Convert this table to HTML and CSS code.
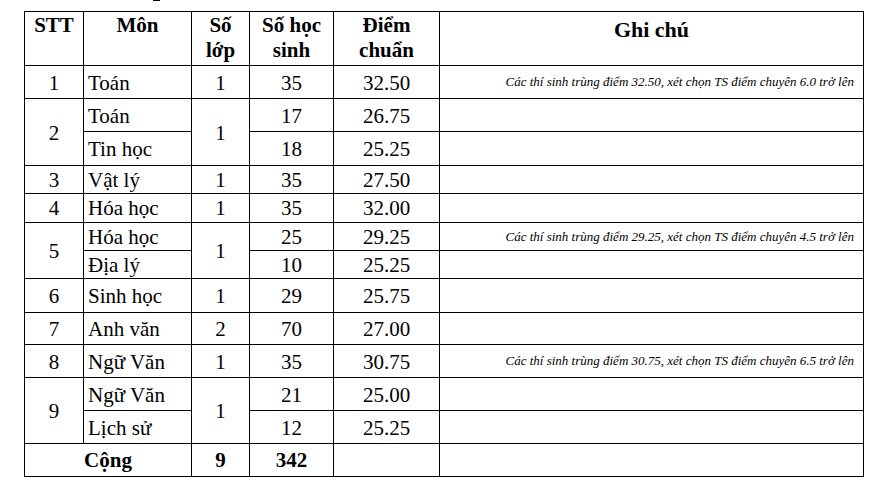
FILE: index.html
```html
<!DOCTYPE html>
<html lang="vi">
<head>
<meta charset="utf-8">
<title>Điểm chuẩn</title>
<link rel="stylesheet" href="styles.css">
</head>
<body>
<div class="page">
  <span class="stray"></span>
  <table class="scores">
    <colgroup>
      <col class="c-stt">
      <col class="c-mon">
      <col class="c-lop">
      <col class="c-hs">
      <col class="c-diem">
      <col class="c-note">
    </colgroup>
    <thead>
      <tr class="r54">
        <th>STT</th>
        <th>Môn</th>
        <th>Số<br>lớp</th>
        <th>Số học<br>sinh</th>
        <th>Điểm<br>chuẩn</th>
        <th class="note-h">Ghi chú</th>
      </tr>
    </thead>
    <tbody>
      <tr class="r33 tall">
        <td>1</td><td class="mon">Toán</td><td>1</td><td>35</td><td>32.50</td>
        <td class="note">Các thí sinh trùng điểm 32.50, xét chọn TS điểm chuyên 6.0 trở lên</td>
      </tr>
      <tr class="r33 tall">
        <td rowspan="2">2</td><td class="mon">Toán</td><td rowspan="2">1</td><td>17</td><td>26.75</td><td class="note"></td>
      </tr>
      <tr class="r34 tall">
        <td class="mon">Tin học</td><td>18</td><td>25.25</td><td class="note"></td>
      </tr>
      <tr class="r28">
        <td>3</td><td class="mon">Vật lý</td><td>1</td><td>35</td><td>27.50</td><td class="note"></td>
      </tr>
      <tr class="r29">
        <td>4</td><td class="mon">Hóa học</td><td>1</td><td>35</td><td>32.00</td><td class="note"></td>
      </tr>
      <tr class="r28">
        <td rowspan="2">5</td><td class="mon">Hóa học</td><td rowspan="2">1</td><td>25</td><td>29.25</td>
        <td class="note">Các thí sinh trùng điểm 29.25, xét chọn TS điểm chuyên 4.5 trở lên</td>
      </tr>
      <tr class="r28">
        <td class="mon">Địa lý</td><td>10</td><td>25.25</td><td class="note"></td>
      </tr>
      <tr class="r34 tall">
        <td>6</td><td class="mon">Sinh học</td><td>1</td><td>29</td><td>25.75</td><td class="note"></td>
      </tr>
      <tr class="r32 tall">
        <td>7</td><td class="mon">Anh văn</td><td>2</td><td>70</td><td>27.00</td><td class="note"></td>
      </tr>
      <tr class="r33 tall">
        <td>8</td><td class="mon">Ngữ Văn</td><td>1</td><td>35</td><td>30.75</td>
        <td class="note">Các thí sinh trùng điểm 30.75, xét chọn TS điểm chuyên 6.5 trở lên</td>
      </tr>
      <tr class="r33 tall">
        <td rowspan="2">9</td><td class="mon">Ngữ Văn</td><td rowspan="2">1</td><td>21</td><td>25.00</td><td class="note"></td>
      </tr>
      <tr class="r33 tall">
        <td class="mon">Lịch sử</td><td>12</td><td>25.25</td><td class="note"></td>
      </tr>
      <tr class="r33 total">
        <td colspan="2">Cộng</td><td>9</td><td>342</td><td></td><td class="note"></td>
      </tr>
    </tbody>
  </table>
</div>
</body>
</html>
```

FILE: styles.css
```css
html, body {
  margin: 0;
  padding: 0;
  background: #ffffff;
}

.page {
  position: relative;
  padding: 11px 0 0 24px;
  font-family: "Liberation Serif", "Times New Roman", serif;
  color: #000;
}

.stray {
  position: absolute;
  left: 153px;
  top: 0;
  width: 7px;
  height: 1px;
  background: #000;
}

.scores {
  border-collapse: collapse;
  table-layout: fixed;
  width: 840px;
  font-size: 21px;
}

.c-stt { width: 59px; }
.c-mon { width: 108px; }
.c-lop { width: 58px; }
.c-hs { width: 84px; }
.c-diem { width: 106px; }

.scores th,
.scores td {
  border: 1px solid #000;
  text-align: center;
  padding: 0 4px;
  vertical-align: middle;
  line-height: 24px;
  white-space: nowrap;
}

.scores th {
  font-weight: bold;
  vertical-align: top;
  line-height: 25px;
  padding-top: 1px;
}

.scores th.note-h {
  padding-top: 5px;
  font-size: 22px;
}

.r54 { height: 54px; }
.r34 { height: 34px; }
.r33 { height: 33px; }
.r32 { height: 32px; }
.r29 { height: 29px; }
.r28 { height: 28px; }

.tall td {
  padding-top: 1px;
}

.scores td.mon {
  text-align: left;
  padding-left: 4px;
}

.scores td.note {
  font-style: italic;
  font-size: 13px;
  text-align: right;
  padding: 0 9px 0 4px;
}

.total td {
  font-weight: bold;
}
```
